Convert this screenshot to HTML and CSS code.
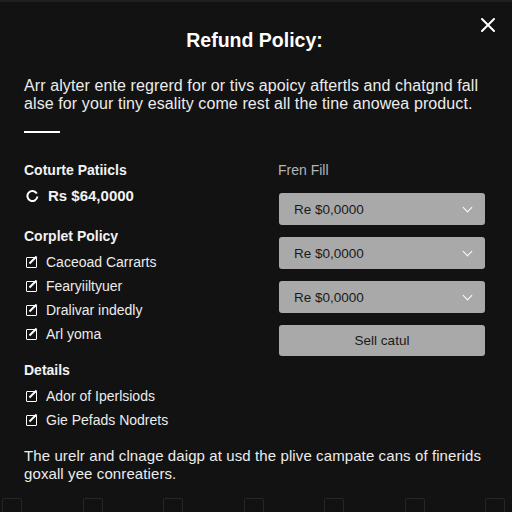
FILE: index.html
```html
<!DOCTYPE html>
<html lang="en">
  <head>
    <meta charset="UTF-8" />
    <meta name="viewport" content="width=device-width, initial-scale=1.0" />
    <title>Refund Policy</title>
    <link rel="stylesheet" href="styles.css">
  </head>
  <body>
    <div class="modal">
      <header class="modal-header">
        <h1>Refund Policy:</h1>
        <button class="close-button" aria-label="Close">
          <svg width="14" height="14" viewBox="0 0 14 14">
            <path d="M1 1 L13 13 M13 1 L1 13" stroke="#fff" stroke-width="2" stroke-linecap="round" />
          </svg>
        </button>
      </header>

      <p class="intro">
        Arr alyter ente regrerd for or tivs apoicy aftertls and chatgnd fall
        alse for your tiny esality come rest all the tine anowea product.
      </p>
      <div class="divider"></div>

      <main class="policy-grid">
        <section class="policy-left">
          <h2>Coturte Patiicls</h2>
          <div class="amount">
            <svg width="13" height="13" viewBox="0 0 13 13">
              <path d="M10.8 3.6 A5 5 0 1 0 11.4 6.5" fill="none" stroke="#fff" stroke-width="2" />
            </svg>
            <span>Rs $64,0000</span>
          </div>

          <h2 class="group-title">Corplet Policy</h2>
          <ul class="policy-list">
            <li><span class="edit-icon"></span>Caceoad Carrarts</li>
            <li><span class="edit-icon"></span>Fearyiiltyuer</li>
            <li><span class="edit-icon"></span>Dralivar indedly</li>
            <li><span class="edit-icon"></span>Arl yoma</li>
          </ul>

          <h2 class="group-title details-title">Details</h2>
          <ul class="policy-list">
            <li><span class="edit-icon"></span>Ador of Iperlsiods</li>
            <li><span class="edit-icon"></span>Gie Pefads Nodrets</li>
          </ul>
        </section>

        <section class="policy-right">
          <label class="fill-label">Fren Fill</label>
          <div class="select-box"><span>Re $0,0000</span><span class="chevron"></span></div>
          <div class="select-box"><span>Re $0,0000</span><span class="chevron"></span></div>
          <div class="select-box"><span>Re $0,0000</span><span class="chevron"></span></div>
          <button class="sell-button">Sell catul</button>
        </section>
      </main>

      <p class="footer-text">
        The urelr and clnage daigp at usd the plive campate cans of finerids
        goxall yee conreatiers.
      </p>

      <nav class="tab-bar">
        <span class="tab-icon"></span>
        <span class="tab-icon"></span>
        <span class="tab-icon"></span>
        <span class="tab-icon"></span>
        <span class="tab-icon"></span>
        <span class="tab-icon"></span>
        <span class="tab-icon"></span>
      </nav>
    </div>
  </body>
</html>
```

FILE: styles.css
```css
body {
  font-family: "Liberation Sans", Arial, sans-serif;
  margin: 0;
  padding: 0;
  background-color: #121212;
  color: #f2f2f2;
}

.modal {
  height: 512px;
  box-sizing: border-box;
  border-top: 2px solid #1f1f1f;
  padding: 0 27px 0 24px;
  position: relative;
  overflow: hidden;
}

.modal-header {
  text-align: center;
  padding-top: 27px;
}

.modal-header h1 {
  margin: 0;
  font-size: 19.5px;
  line-height: 22px;
  font-weight: bold;
  color: #fff;
}

.close-button {
  position: absolute;
  top: 16px;
  right: 17px;
  background: none;
  border: none;
  padding: 0;
  cursor: pointer;
}

.intro {
  margin: 26px 0 0;
  font-size: 16px;
  line-height: 18px;
  letter-spacing: 0.1px;
  color: #ececec;
}

.divider {
  width: 36px;
  height: 2px;
  background-color: #fff;
  margin-top: 18px;
}

.policy-grid {
  display: grid;
  grid-template-columns: 1fr 206px;
  margin-top: 28px;
}

.policy-left h2 {
  margin: 0;
  font-size: 14px;
  line-height: 18px;
  font-weight: bold;
}

.policy-left .group-title {
  margin-top: 22px;
}

.policy-left .details-title {
  margin-top: 15px;
}

.amount {
  display: flex;
  align-items: center;
  gap: 9px;
  margin-top: 8px;
  font-size: 15px;
  font-weight: bold;
  line-height: 18px;
  padding-left: 2px;
}

.policy-list {
  list-style: none;
  margin: 5px 0 0;
  padding: 0;
}

.policy-list li {
  display: flex;
  align-items: center;
  gap: 9px;
  height: 24px;
  font-size: 14px;
  color: #ececec;
  padding-left: 2px;
}

.edit-icon {
  width: 9px;
  height: 9px;
  border: 1.5px solid #fff;
  border-radius: 1px;
  position: relative;
}

.edit-icon::after {
  content: "";
  position: absolute;
  width: 2px;
  height: 10px;
  background-color: #fff;
  left: 5px;
  top: -3px;
  transform: rotate(45deg);
}

.policy-right {
  display: flex;
  flex-direction: column;
}

.fill-label {
  font-size: 14px;
  line-height: 18px;
  color: #b5b5b5;
  margin-left: -1px;
  margin-bottom: 14px;
}

.select-box {
  display: flex;
  justify-content: space-between;
  align-items: center;
  height: 32px;
  margin-bottom: 12px;
  padding: 0 14px 0 15px;
  background-color: #a9a9a9;
  border-radius: 3px;
  color: #1a1a1a;
  font-size: 13.5px;
}

.chevron {
  width: 6px;
  height: 6px;
  border-right: 1.5px solid #fff;
  border-bottom: 1.5px solid #fff;
  transform: rotate(45deg);
  margin-top: -4px;
}

.sell-button {
  height: 31px;
  background-color: #a9a9a9;
  border: none;
  border-radius: 3px;
  color: #1a1a1a;
  font-family: inherit;
  font-size: 13.5px;
}

.footer-text {
  margin: 15px 0 0;
  font-size: 15px;
  line-height: 18px;
  letter-spacing: 0.1px;
  color: #ececec;
}

.tab-bar {
  display: flex;
  justify-content: space-between;
  margin: 15px -20px 0 -22px;
}

.tab-icon {
  width: 18px;
  height: 20px;
  border: 1.5px solid #262626;
  border-radius: 2px;
}
```
